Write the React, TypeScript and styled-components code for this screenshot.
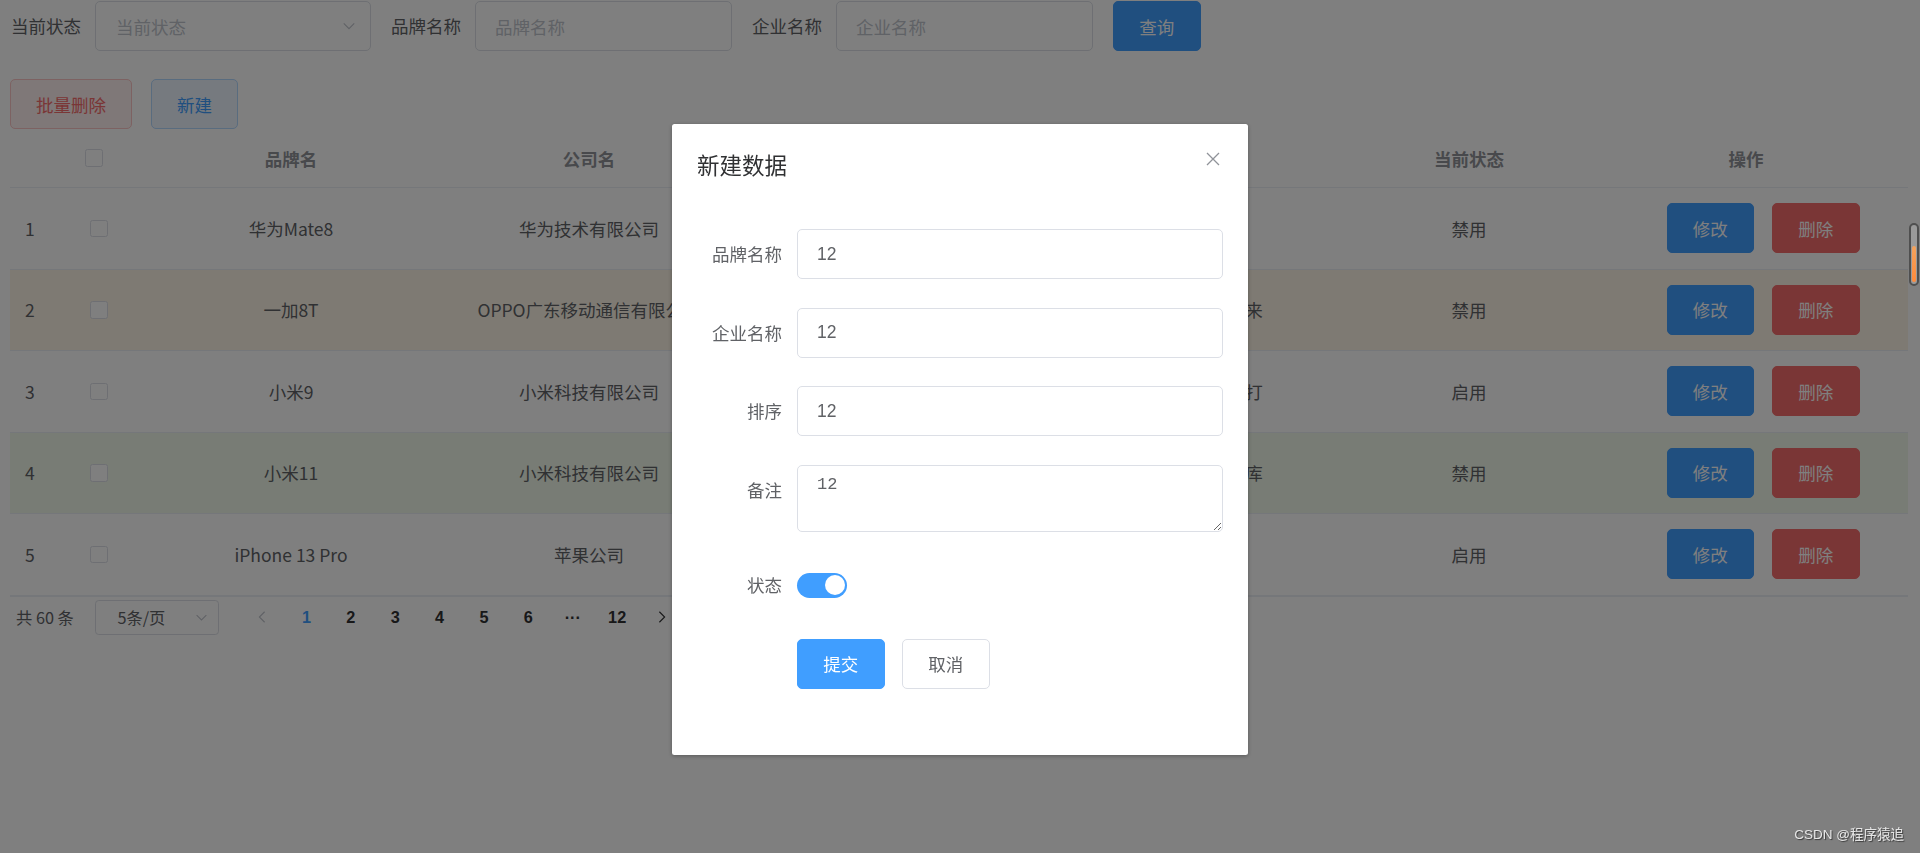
import React from 'react';
import styled, { createGlobalStyle } from 'styled-components';

const GlobalStyle = createGlobalStyle`
  html, body {
    margin: 0;
    padding: 0;
    background: #fff;
  }
  body {
    font-family: "Noto Sans CJK SC", "Liberation Sans", sans-serif;
    color: #606266;
  }
  * {
    box-sizing: border-box;
  }
`;

const COLUMNS = '60px 58px 326px 270px 220px 410px 230px 324px';

type Tone = 'plain' | 'warning' | 'success';

interface Brand {
  id: number;
  brand: string;
  company: string;
  ordered: number;
  remark: string;
  status: string;
  tone: Tone;
}

const rows: Brand[] = [
  { id: 1, brand: '华为Mate8', company: '华为技术有限公司', ordered: 100, remark: '华为经典商务旗舰', status: '禁用', tone: 'plain' },
  { id: 2, brand: '一加8T', company: 'OPPO广东移动通信有限公司', ordered: 90, remark: '不将就，一加快充带你看未来', status: '禁用', tone: 'warning' },
  { id: 3, brand: '小米9', company: '小米科技有限公司', ordered: 80, remark: '为发烧而生，颜值性能都能打', status: '启用', tone: 'plain' },
  { id: 4, brand: '小米11', company: '小米科技有限公司', ordered: 70, remark: '年度旗舰，小米的高端技术库', status: '禁用', tone: 'success' },
  { id: 5, brand: 'iPhone 13 Pro', company: '苹果公司', ordered: 60, remark: '苹果旗舰手机', status: '启用', tone: 'plain' },
];

const pages = ['1', '2', '3', '4', '5', '6', '···', '12'];

const Chevron = ({ dir = 'down', size = 14, color = '#C0C4CC' }: { dir?: 'down' | 'left' | 'right'; size?: number; color?: string }) => {
  const d = dir === 'down' ? 'M2 5l6 6 6-6' : dir === 'left' ? 'M11 2L5 8l6 6' : 'M5 2l6 6-6 6';
  return (
    <svg width={size} height={size} viewBox="0 0 16 16" fill="none">
      <path d={d} stroke={color} strokeWidth="1.3" />
    </svg>
  );
};

const App: React.FC = () => {
  return (
    <>
      <GlobalStyle />
      <Page>
        <SearchForm>
          <FieldLabel>当前状态</FieldLabel>
          <SelectBox>
            <span>当前状态</span>
            <Chevron />
          </SelectBox>
          <FieldLabel>品牌名称</FieldLabel>
          <InputBox>品牌名称</InputBox>
          <FieldLabel>企业名称</FieldLabel>
          <InputBox>企业名称</InputBox>
          <SolidButton $kind="primary">查询</SolidButton>
        </SearchForm>

        <ActionBar>
          <PlainButton $kind="danger" $width={122}>批量删除</PlainButton>
          <PlainButton $kind="primary" $width={87}>新建</PlainButton>
        </ActionBar>

        <Table>
          <HeadRow>
            <HeadCell />
            <HeadCell>
              <CheckBox $shift={10} />
            </HeadCell>
            <HeadCell>品牌名</HeadCell>
            <HeadCell>公司名</HeadCell>
            <HeadCell>排序</HeadCell>
            <HeadCell>备注</HeadCell>
            <HeadCell>当前状态</HeadCell>
            <HeadCell>操作</HeadCell>
          </HeadRow>
          {rows.map((item) => (
            <BodyRow key={item.id} $tone={item.tone}>
              <IndexCell>{item.id}</IndexCell>
              <Cell>
                <CheckBox />
              </Cell>
              <Cell>{item.brand}</Cell>
              <Cell>{item.company}</Cell>
              <Cell>{item.ordered}</Cell>
              <Cell>{item.remark}</Cell>
              <Cell>{item.status}</Cell>
              <OpsCell>
                <SolidButton $kind="primary">修改</SolidButton>
                <SolidButton $kind="danger">删除</SolidButton>
              </OpsCell>
            </BodyRow>
          ))}
        </Table>

        <Pagination>
          <Total>共 60 条</Total>
          <SizeSelect>
            <span>5条/页</span>
            <SizeArrow>
              <Chevron size={13} />
            </SizeArrow>
          </SizeSelect>
          <PagerItem>
            <Chevron dir="left" size={14} color="#C0C4CC" />
          </PagerItem>
          {pages.map((p) => (
            <PagerItem key={p} $active={p === '1'}>
              {p}
            </PagerItem>
          ))}
          <PagerItem>
            <Chevron dir="right" size={14} color="#303133" />
          </PagerItem>
          <Jumper>
            前往 <JumpBox>1</JumpBox> 页
          </Jumper>
        </Pagination>
      </Page>

      <Overlay />

      <DialogWrap>
        <Dialog>
          <DialogHeader>
            <DialogTitle>新建数据</DialogTitle>
            <CloseButton>
              <svg width="20" height="20" viewBox="0 0 20 20" fill="none">
                <path d="M4 4l12 12M16 4L4 16" stroke="#909399" strokeWidth="1.3" />
              </svg>
            </CloseButton>
          </DialogHeader>
          <DialogBody>
            <FormItem>
              <FormLabel>品牌名称</FormLabel>
              <FormInput defaultValue="12" />
            </FormItem>
            <FormItem>
              <FormLabel>企业名称</FormLabel>
              <FormInput defaultValue="12" />
            </FormItem>
            <FormItem>
              <FormLabel>排序</FormLabel>
              <FormInput defaultValue="12" />
            </FormItem>
            <FormItem>
              <FormLabel>备注</FormLabel>
              <FormTextarea defaultValue="12" rows={2} />
            </FormItem>
            <FormItem>
              <FormLabel>状态</FormLabel>
              <SwitchCore>
                <SwitchKnob />
              </SwitchCore>
            </FormItem>
            <FormItem>
              <FormLabel />
              <DialogButtons>
                <SolidButton $kind="primary">提交</SolidButton>
                <PlainButton $kind="default" $width={87.5}>取消</PlainButton>
              </DialogButtons>
            </FormItem>
          </DialogBody>
        </Dialog>
      </DialogWrap>

      <ScrollGrip>
        <ScrollFill />
      </ScrollGrip>
      <Watermark>CSDN @程序猿追</Watermark>
    </>
  );
};

const Page = styled.div`
  width: 1920px;
  height: 853px;
  padding: 1px 10px 0;
  overflow: hidden;
  background: #fff;
`;

const SearchForm = styled.div`
  display: flex;
  align-items: center;
  height: 50px;
  padding-left: 1px;
`;

const FieldLabel = styled.span`
  font-size: 17.5px;
  line-height: 50px;
  color: #606266;
  padding-right: 14px;
  white-space: nowrap;
`;

const SelectBox = styled.div`
  width: 276px;
  height: 50px;
  margin-right: 20px;
  border: 1px solid #dcdfe6;
  border-radius: 5px;
  display: flex;
  align-items: center;
  justify-content: space-between;
  padding: 0 14px 0 20px;
  font-size: 17.5px;
  color: #c0c4cc;
`;

const InputBox = styled.div`
  width: 257px;
  height: 50px;
  margin-right: 20px;
  border: 1px solid #dcdfe6;
  border-radius: 5px;
  display: flex;
  align-items: center;
  padding: 0 19px;
  font-size: 17.5px;
  color: #c0c4cc;
`;

const buttonColors = {
  primary: { bg: '#409eff', border: '#409eff', text: '#fff', plainBg: '#ecf5ff', plainBorder: '#b3d8ff' },
  danger: { bg: '#f56c6c', border: '#f56c6c', text: '#fff', plainBg: '#fef0f0', plainBorder: '#fbc4c4' },
  default: { bg: '#fff', border: '#dcdfe6', text: '#606266', plainBg: '#fff', plainBorder: '#dcdfe6' },
};

const SolidButton = styled.button<{ $kind: 'primary' | 'danger' }>`
  width: 87.5px;
  height: 50px;
  border-radius: 5px;
  border: 1px solid ${(p) => buttonColors[p.$kind].border};
  background: ${(p) => buttonColors[p.$kind].bg};
  color: #fff;
  font-family: "Noto Sans CJK SC", sans-serif;
  font-size: 17.5px;
  padding: 0;
  flex-shrink: 0;
`;

const PlainButton = styled.button<{ $kind: 'primary' | 'danger' | 'default'; $width: number }>`
  width: ${(p) => p.$width}px;
  height: 50px;
  border-radius: 5px;
  border: 1px solid ${(p) => buttonColors[p.$kind].plainBorder};
  background: ${(p) => buttonColors[p.$kind].plainBg};
  color: ${(p) => (p.$kind === 'default' ? '#606266' : buttonColors[p.$kind].bg)};
  font-family: "Noto Sans CJK SC", sans-serif;
  font-size: 17.5px;
  padding: 0;
`;

const ActionBar = styled.div`
  display: flex;
  gap: 19px;
  margin-top: 28px;
`;

const Table = styled.div`
  width: 1898px;
  border-bottom: 1px solid #ebeef5;
`;

const HeadRow = styled.div`
  display: grid;
  grid-template-columns: ${COLUMNS};
  height: 59px;
  border-bottom: 1px solid #ebeef5;
`;

const toneBg: Record<Tone, string> = {
  plain: '#fff',
  warning: '#fdf5e6',
  success: '#f0f9eb',
};

const BodyRow = styled.div<{ $tone: Tone }>`
  display: grid;
  grid-template-columns: ${COLUMNS};
  height: 81.5px;
  border-bottom: 1px solid #ebeef5;
  background: ${(p) => toneBg[p.$tone]};
`;

const Cell = styled.div`
  display: flex;
  align-items: center;
  justify-content: center;
  font-size: 17.5px;
  color: #606266;
  white-space: nowrap;
  overflow: hidden;
`;

const HeadCell = styled(Cell)`
  font-weight: 700;
  color: #909399;
`;

const IndexCell = styled(Cell)`
  justify-content: flex-start;
  padding-left: 15px;
`;

const OpsCell = styled(Cell)`
  gap: 18px;
  padding-left: 34px;
`;

const CheckBox = styled.span<{ $shift?: number }>`
  width: 17.5px;
  height: 17.5px;
  border: 1px solid #dcdfe6;
  border-radius: 2.5px;
  background: #fff;
  margin-right: ${(p) => p.$shift || 0}px;
`;

const Pagination = styled.div`
  display: flex;
  align-items: center;
  height: 35px;
  margin-top: 3px;
  padding-left: 6px;
  font-size: 16.25px;
`;

const Total = styled.span`
  color: #606266;
  margin-right: 21px;
`;

const SizeSelect = styled.div`
  position: relative;
  width: 124px;
  height: 35px;
  border: 1px solid #dcdfe6;
  border-radius: 3.75px;
  display: flex;
  align-items: center;
  justify-content: center;
  padding-right: 31px;
  margin-right: 21px;
  color: #606266;
`;

const SizeArrow = styled.span`
  position: absolute;
  right: 10px;
  top: 10px;
  display: flex;
`;

const PagerItem = styled.span<{ $active?: boolean }>`
  width: 44.4px;
  height: 35px;
  display: flex;
  align-items: center;
  justify-content: center;
  font-family: "Liberation Sans", "Noto Sans CJK SC", sans-serif;
  font-weight: 700;
  font-size: 16.25px;
  color: ${(p) => (p.$active ? '#409eff' : '#303133')};
`;

const Jumper = styled.span`
  margin-left: 30px;
  color: #606266;
  display: flex;
  align-items: center;
  gap: 6px;
`;

const JumpBox = styled.span`
  width: 62px;
  height: 35px;
  border: 1px solid #dcdfe6;
  border-radius: 3.75px;
  display: flex;
  align-items: center;
  justify-content: center;
`;

const Overlay = styled.div`
  position: fixed;
  inset: 0;
  background: rgba(0, 0, 0, 0.5);
  z-index: 10;
`;

const DialogWrap = styled.div`
  position: fixed;
  inset: 0;
  z-index: 11;
  display: flex;
  justify-content: center;
  align-items: flex-start;
  padding-top: 124px;
`;

const Dialog = styled.div`
  width: 576px;
  background: #fff;
  border-radius: 2.5px;
  box-shadow: 0 1px 4px rgba(0, 0, 0, 0.3);
`;

const DialogHeader = styled.div`
  position: relative;
  padding: 25px 25px 12.5px;
`;

const DialogTitle = styled.span`
  display: block;
  font-size: 22.5px;
  line-height: 30px;
  color: #303133;
`;

const CloseButton = styled.span`
  position: absolute;
  top: 25px;
  right: 25px;
  width: 20px;
  height: 20px;
  display: flex;
`;

const DialogBody = styled.div`
  padding: 37.5px 25px;
`;

const FormItem = styled.div`
  display: flex;
  align-items: flex-start;
  margin-bottom: 28.5px;
`;

const FormLabel = styled.label`
  width: 100px;
  flex-shrink: 0;
  text-align: right;
  padding-right: 15px;
  font-size: 17.5px;
  line-height: 50px;
  color: #606266;
`;

const FormInput = styled.input`
  width: 426px;
  height: 50px;
  border: 1px solid #dcdfe6;
  border-radius: 5px;
  padding: 0 19px;
  font-family: "Liberation Sans", sans-serif;
  font-size: 17.5px;
  color: #606266;
  outline: none;
`;

const FormTextarea = styled.textarea`
  width: 426px;
  height: 67px;
  border: 1px solid #dcdfe6;
  border-radius: 5px;
  padding: 6px 19px;
  font-family: "Liberation Mono", monospace;
  font-size: 17px;
  line-height: 26px;
  color: #606266;
  resize: vertical;
  outline: none;
  display: block;
`;

const SwitchCore = styled.span`
  margin-top: 12.5px;
  width: 50px;
  height: 25px;
  border-radius: 12.5px;
  background: #409eff;
  display: flex;
  align-items: center;
  justify-content: flex-end;
  padding-right: 2px;
`;

const SwitchKnob = styled.span`
  width: 20px;
  height: 20px;
  border-radius: 50%;
  background: #fff;
`;

const DialogButtons = styled.div`
  display: flex;
  gap: 17.5px;
`;

const ScrollGrip = styled.div`
  position: fixed;
  left: 1909px;
  top: 223px;
  width: 10px;
  height: 63px;
  border: 2px solid #4f4f4f;
  border-radius: 6px;
  background: #9a9a9a;
  z-index: 20;
  display: flex;
  flex-direction: column;
  justify-content: flex-end;
  padding: 0 1px 2px;
`;

const ScrollFill = styled.div`
  height: 36px;
  border-radius: 2px;
  background: linear-gradient(#f3a35e, #ff8a3c);
`;

const Watermark = styled.div`
  position: fixed;
  right: 16px;
  bottom: 10px;
  z-index: 20;
  font-family: "Liberation Sans", "Noto Sans CJK SC", sans-serif;
  font-size: 13.5px;
  color: #e6e6e6;
  text-shadow: 1px 1px 1px rgba(0, 0, 0, 0.55);
`;

export default App;
